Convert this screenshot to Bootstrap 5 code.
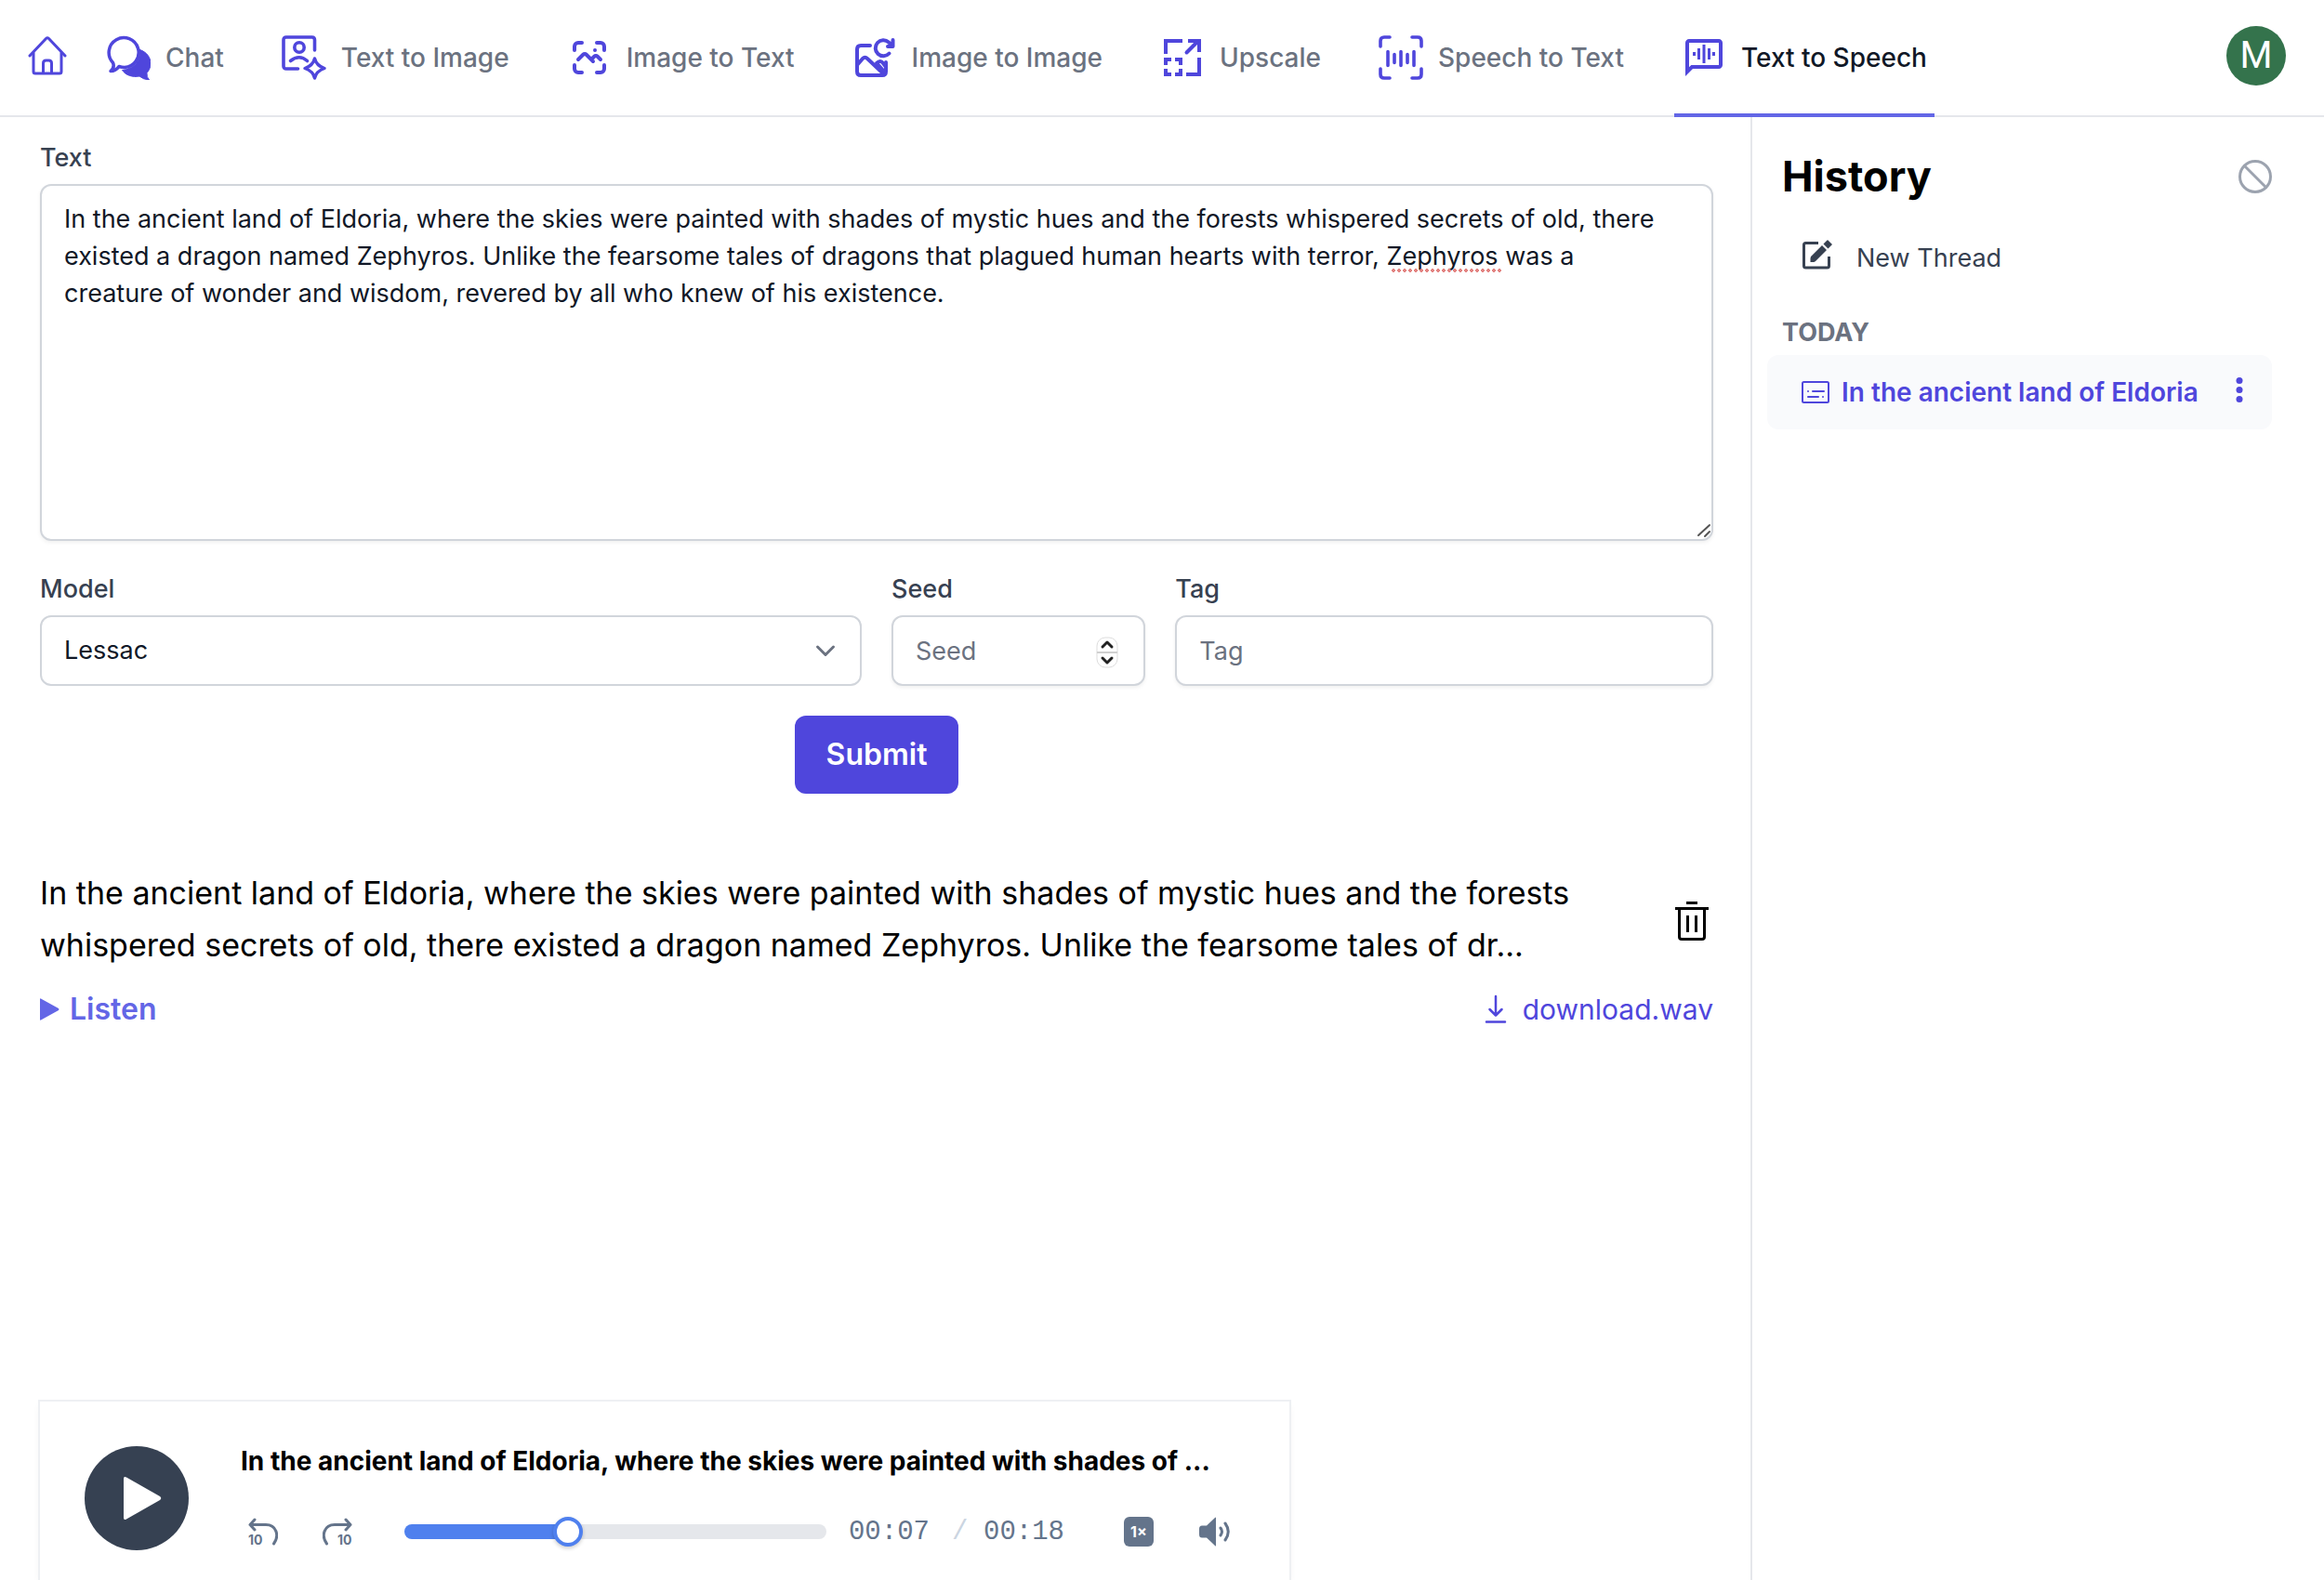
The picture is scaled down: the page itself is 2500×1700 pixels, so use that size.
<!DOCTYPE html>
<html lang="en">
<head>
<meta charset="utf-8">
<meta name="viewport" content="width=device-width, initial-scale=1">
<title>Text to Speech</title>
<link href="https://cdn.jsdelivr.net/npm/bootstrap@5.3.0/dist/css/bootstrap.min.css" rel="stylesheet">
<style>
  :root { --indigo: #4f46dc; --indigo-light: #6366e6; --line: #e5e7eb; --field: #d1d5db; --ink: #111827; --ink-soft: #374151; --muted: #6b7280; --slate: #64748b; }
  body { font-family: Inter, "Liberation Sans", sans-serif; font-size: 28px; line-height: 40px; color: #000; background: #fff; }
  svg { display: block; flex: none; }
  .ico { fill: none; stroke: currentColor; stroke-linecap: round; stroke-linejoin: round; }
  a { text-decoration: none; }

  .topbar { height: 126px; border-bottom: 2px solid var(--line); padding: 0 41px 0 28px; }
  .home-link { color: var(--indigo); margin-right: 32px; }
  .tabs { gap: 46px; }
  .tab-link { height: 126px; margin-bottom: -2px; padding: 2px 8px 0; gap: 16px; font-weight: 500; color: var(--muted); border-bottom: 4px solid transparent; white-space: nowrap; }
  .tab-link svg { color: var(--indigo); }
  .tab-link.active { color: var(--ink); border-bottom-color: var(--indigo-light); }
  .avatar { width: 64px; height: 64px; margin-bottom: 4px; border: 0; padding: 0; background: #34734c; color: #fff; font-family: Roboto, sans-serif; font-size: 40px; font-weight: 400; }

  .workspace { min-height: calc(100vh - 126px); }
  .main-pane { padding: 24px 40px 0 43px; }
  .history-pane { width: 617px; border-left: 2px solid var(--line); padding: 32px 56px 0 16px; }

  .form-label { font-size: 27px; font-weight: 500; color: var(--ink-soft); margin-bottom: 8px; display: block; }
  .field-row { --bs-gutter-x: 32px; margin-top: 32px; }
  .form-control, .form-select { font-size: 27px; line-height: 40px; color: var(--ink); border: 2px solid var(--field); border-radius: 12px; padding: 16px 24px; box-shadow: 0 2px 4px rgba(0,0,0,.06); }
  .form-control::placeholder { color: var(--muted); opacity: 1; }
  .form-select { box-shadow: none; background-size: 22px 14px; background-position: right 26px center;
    background-image: url("data:image/svg+xml,%3csvg xmlns='http://www.w3.org/2000/svg' viewBox='0 0 22 14'%3e%3cpath fill='none' stroke='%236b7280' stroke-width='3' stroke-linecap='round' stroke-linejoin='round' d='M2.500 3l8.500 8.500 8.500-8.500'/%3e%3c/svg%3e"); }
  input.form-control, .form-select { height: 76px; }
  textarea.form-control { height: 384px; resize: none; padding-right: 40px; }
  .grip { position: absolute; right: 2px; bottom: 3px; color: #555; }
  .misspelt { position: absolute; left: 1454px; top: 91px; width: 118px; height: 4px; background: radial-gradient(circle at 2px 2px, #e38482 2px, transparent 2px) 0 0 / 6px 4px repeat-x; }
  .stepper { position: absolute; right: 28px; top: 22px; }
  .btn-submit { margin-top: 32px; height: 84px; padding: 0 34px; border-radius: 12px; font-size: 32px; font-weight: 600; background: var(--indigo); color: #fff; border: 0; }

  .clip { margin-top: 79px; }
  .clip-text { font-size: 34px; line-height: 56px; max-width: 1680px; }
  .clip-links { font-size: 30px; margin-top: 21px; }
  .plain-btn { border: 0; background: none; padding: 0; color: inherit; }
  .listen { color: var(--indigo-light); font-size: 32px; font-weight: 600; gap: 11px; }
  .download { color: var(--indigo); gap: 16px; }

  .player { max-width: 1344px; width: 100%; box-shadow: 0 0 0 2px #eef0f3, 0 4px 8px rgba(15,23,42,.06); padding: 44px 62px 28px 48px; gap: 56px; }
  .play-btn { width: 112px; height: 112px; border: 0; background: #364152; color: #fff; padding: 0; }
  .player-title { font-weight: 700; margin-bottom: 32px; white-space: nowrap; }
  .controls { height: 48px; color: var(--slate); }
  .skips { gap: 48px; padding-left: 8px; width: 176px; }
  .seek { --played: 0%; appearance: none; height: 16px; border-radius: 8px; margin: 0; min-width: 0; background: linear-gradient(to right, #4f80ee var(--played), #e5e7eb var(--played)); }
  .seek::-webkit-slider-thumb { -webkit-appearance: none; width: 32px; height: 32px; border-radius: 50%; background: #fff; border: 4px solid #4f80ee; box-shadow: 0 2px 4px rgba(0,0,0,.2); }
  .seek::-moz-range-thumb { width: 24px; height: 24px; border-radius: 50%; background: #fff; border: 4px solid #4f80ee; }
  .times { font-family: "Liberation Mono", monospace; font-size: 29px; margin-left: 24px; gap: 24px; padding-top: 2px; white-space: nowrap; }
  .times .sep { color: #cbd5e1; width: 10px; }
  .speed { width: 32px; height: 32px; border: 0; border-radius: 6px; background: var(--slate); color: #fff; font-size: 16px; line-height: 32px; font-weight: 700; padding: 0; margin-left: 64px; }
  .volume { margin-left: 48px; }
  .svg-digits { font: 700 14px Inter, sans-serif; fill: currentColor; stroke: none; }

  .history-title { font-size: 45px; line-height: 64px; font-weight: 700; margin: 0; }
  .clear-btn { color: #9ca3af; }
  .history-head { padding-left: 16px; }
  .new-thread { color: var(--ink-soft); font-size: 27px; margin-top: 36px; padding-left: 38px; gap: 26px; }
  .day { font-size: 27px; line-height: 40px; font-weight: 700; color: var(--muted); margin: 40px 0 4px; padding-left: 16px; }
  .thread { height: 80px; border-radius: 12px; background: #f9fafc; color: var(--indigo); padding: 0 28px 0 36px; }
  .thread a { color: inherit; font-weight: 600; gap: 12px; white-space: nowrap; }
</style>
</head>
<body>
<header class="topbar d-flex align-items-center">
  <a class="home-link" href="#" aria-label="Home">
    <svg class="ico" width="46" height="48" viewBox="0 3 46 48" stroke-width="3"><path d="M4 25 21.500 6.500q1.500-1.500 3 0L42 25"/><path d="M8 22v20q0 2 2 2h26q2 0 2-2V22"/><path d="M18.500 43.500V33q0-3 3-3h3q3 0 3 3v10.500"/></svg>
  </a>
  <nav class="tabs d-flex" aria-label="Tools">
    <a class="tab-link d-flex align-items-center" href="#">
      <svg class="ico" width="48" height="48" viewBox="0 0 48 48"><path d="M5 38.500C8 36 9 33 7.500 29.500A16 16 0 1 1 20 34.500q-3 0-6-1-3.500 5-9 5Z" stroke-width="3.500"/><path d="M36.500 15.500C44 18 48 24 48 30c0 5-2 8-4 10.500q-.500 4.500 2.500 7.500-6.500-.500-10.500-4c-7 1.500-15-1-18.500-6.500C29 36 37.500 29 36.500 15.500Z" fill="currentColor"/></svg>
      <span>Chat</span></a>
    <a class="tab-link d-flex align-items-center" href="#">
      <svg class="ico" width="48" height="48" viewBox="0 0 48 48" stroke-width="3.600"><path d="M17.500 36H5q-3 0-3-3V5q0-3 3-3h27.500q3 0 3 3v11"/><circle cx="19" cy="13" r="5.200"/><path d="M9.500 27.500q9.500-7.500 18 0"/><path d="M35.500 25c1.500 6 4.500 8.500 10.500 10.500-6 2-9 4.500-10.500 10.500-1.500-6-4.500-8.500-10.500-10.500 6-2 9-4.500 10.500-10.500Z" stroke-width="3.400"/></svg>
      <span>Text to Image</span></a>
    <a class="tab-link d-flex align-items-center" href="#">
      <svg class="ico" width="48" height="48" viewBox="0 0 24 24" stroke-width="2"><path d="M15 8h.01M6 13l2.644-2.644a1.210 1.210 0 0 1 1.712 0L14 14M13 13l1.644-1.644a1.210 1.210 0 0 1 1.712 0L18 13M4 8V6a2 2 0 0 1 2-2h2M4 16v2a2 2 0 0 0 2 2h2M16 4h2a2 2 0 0 1 2 2v2M16 20h2a2 2 0 0 0 2-2v-2"/></svg>
      <span>Image to Text</span></a>
    <a class="tab-link d-flex align-items-center" href="#">
      <svg class="ico" width="48" height="48" viewBox="0 0 48 48" stroke-width="4"><path d="M19 11H9q-4 0-4 4v24q0 4 4 4h23q4 0 4-4V29"/><path d="M5 32l6-7q2.500-2.500 5 0l18 17"/><path d="M26 30q4-4 7 0l3 4M27 31l8 9"/><path d="M39.500 19.500A8.500 8.500 0 1 1 39 7.500l4 3.500M43.500 5v7H38"/></svg>
      <span>Image to Image</span></a>
    <a class="tab-link d-flex align-items-center" href="#">
      <svg width="48" height="48" viewBox="0 0 48 48" fill="none" stroke="currentColor" stroke-width="4"><path d="M6 20V6h18M30 6h12v12M42 24v18H28M6 32v-6h6M16 26h6v6M6 36v6h6M16 42h6v-6"/><path d="M28.500 18.500 40 7" stroke-linecap="round"/></svg>
      <span>Upscale</span></a>
    <a class="tab-link d-flex align-items-center" href="#">
      <svg class="ico" width="48" height="48" viewBox="0 0 48 48" stroke-width="3.600"><path d="M12 2H6Q2 2 2 6v6M36 2h6q4 0 4 4v6M2 36v6q0 4 4 4h6M46 36v6q0 4-4 4h-6M10 17.500v15M17 20.500v9M24 17.500v15M31 20.500v9M38 17.500v15"/></svg>
      <span>Speech to Text</span></a>
    <a class="tab-link active d-flex align-items-center" href="#" aria-current="page">
      <svg width="48" height="48" viewBox="0 0 48 48"><path fill="currentColor" d="M40 4H8C5.800 4 4 5.800 4 8v36l8-8h28c2.200 0 4-1.800 4-4V8c0-2.200-1.800-4-4-4Zm0 28H10.300L8 34.300V8h32Z"/><path stroke="currentColor" stroke-width="3" d="M13.500 18v4M18.500 14v12M24 10v20M29.500 14v12M34.500 18v4"/></svg>
      <span>Text to Speech</span></a>
  </nav>
  <button class="avatar rounded-circle ms-auto" type="button">M</button>
</header>

<div class="workspace d-flex">
  <main class="main-pane flex-grow-1 d-flex flex-column">
    <form>
      <label class="form-label" for="speech-text">Text</label>
      <div class="position-relative">
        <textarea class="form-control" id="speech-text" spellcheck="false">In the ancient land of Eldoria, where the skies were painted with shades of mystic hues and the forests whispered secrets of old, there existed a dragon named Zephyros. Unlike the fearsome tales of dragons that plagued human hearts with terror, Zephyros was a creature of wonder and wisdom, revered by all who knew of his existence.</textarea>
        <i class="misspelt"></i>
        <svg class="grip ico" width="16" height="16" viewBox="0 0 16 16" stroke-width="2"><path d="M2 13 14 2M9 14l5-5"/></svg>
      </div>
      <div class="row field-row">
        <div class="col-6">
          <label class="form-label" for="model">Model</label>
          <select class="form-select" id="model"><option>Lessac</option></select>
        </div>
        <div class="col-2">
          <label class="form-label" for="seed">Seed</label>
          <div class="position-relative">
            <input class="form-control" id="seed" type="text" inputmode="numeric" placeholder="Seed">
            <svg class="stepper" width="26" height="36" viewBox="0 0 26 36"><rect x="2" y="2" width="22" height="32" rx="9" fill="#fff" stroke="#ddd"/><path d="M2 18h22" stroke="#d0d0d0" stroke-width="2"/><path fill="none" stroke="#222" stroke-width="3" stroke-linecap="round" stroke-linejoin="round" d="m8 12 5-5 5 5M8 24l5 5 5-5"/></svg>
          </div>
        </div>
        <div class="col-4">
          <label class="form-label" for="tag">Tag</label>
          <input class="form-control" id="tag" type="text" placeholder="Tag">
        </div>
      </div>
      <div class="text-center"><button class="btn btn-submit" type="submit">Submit</button></div>
    </form>

    <section class="clip">
      <div class="d-flex align-items-center justify-content-between">
        <div class="clip-text">In the ancient land of Eldoria, where the skies were painted with shades of mystic hues and the forests whispered secrets of old, there existed a dragon named Zephyros. Unlike the fearsome tales of dr...</div>
        <button class="plain-btn" type="button" aria-label="Delete">
          <svg width="46" height="48" viewBox="0 0 46 48" fill="none" stroke="currentColor" stroke-width="3"><path d="M17 6.500h12M5 12.500h36M9.500 12.500V43q0 2.500 2.500 2.500h22q2.500 0 2.500-2.500V12.500M18.500 20v18M27.500 20v18"/></svg>
        </button>
      </div>
      <div class="clip-links d-flex justify-content-between">
        <button class="plain-btn listen d-flex align-items-center" type="button"><svg width="21" height="24" viewBox="0 0 21 24" fill="currentColor"><path d="M0 1q0-1 1-.5L20 11q1 1 0 2L1 23.500q-1 .500-1-.5Z"/></svg>Listen</button>
        <a class="download d-flex align-items-center" href="#"><svg class="ico" width="26" height="32" viewBox="0 0 26 32" stroke-width="2.500"><path d="M13 2v20M6.500 16l6.500 6.500 6.500-6.500M3 29.500h20"/></svg>download.wav</a>
      </div>
    </section>

    <section class="player d-flex align-items-center mt-auto" aria-label="Player">
      <button class="play-btn rounded-circle d-flex align-items-center justify-content-center flex-shrink-0" type="button" aria-label="Play">
        <svg width="112" height="112" viewBox="0 0 112 112" fill="currentColor"><path d="M42 35q0-3 3-1.500L81 54q2.500 2 0 4L45 78.500Q42 80 42 77Z"/></svg>
      </button>
      <div class="flex-grow-1">
        <div class="player-title">In the ancient land of Eldoria, where the skies were painted with shades of ...</div>
        <div class="controls d-flex align-items-center">
          <div class="skips d-flex flex-shrink-0">
            <button class="plain-btn" type="button" aria-label="Back ten seconds"><svg class="ico" width="32" height="32" viewBox="0 0 32 32" stroke-width="3"><path d="M7 3 2 8.500 7 14M2 8.500h17C30 8.500 34 20 27.500 29"/><text class="svg-digits" x="0" y="30">10</text></svg></button>
            <button class="plain-btn" type="button" aria-label="Forward ten seconds"><svg class="ico" width="32" height="32" viewBox="0 0 32 32" stroke-width="3"><path d="M25 3l5 5.500L25 14M30 8.500H13C2 8.500-2 20 4.500 29"/><text class="svg-digits" x="16" y="30">10</text></svg></button>
          </div>
          <input class="seek flex-grow-1" type="range" min="0" max="100" value="38" aria-label="Seek" style="--played:38%">
          <div class="times d-flex"><span>00:07</span><span class="sep">/</span><span>00:18</span></div>
          <button class="speed flex-shrink-0" type="button">1×</button>
          <button class="plain-btn volume" type="button" aria-label="Volume"><svg width="36" height="32" viewBox="0 0 36 32"><path fill="currentColor" d="M19 1v30q0 1-1 0L9 22.500H4Q1 22.500 1 19v-6q0-3.500 3-3.500h5L18 1q1-1 1 0Z"/><path class="ico" stroke-width="3" d="M24 12q3 4 0 8M29 7q6.500 9 0 18"/></svg></button>
        </div>
      </div>
    </section>
  </main>

  <aside class="history-pane flex-shrink-0">
    <div class="history-head d-flex align-items-center justify-content-between">
      <h2 class="history-title">History</h2>
      <button class="plain-btn clear-btn" type="button" aria-label="Clear"><svg class="ico" width="36" height="36" viewBox="0 0 36 36" stroke-width="3"><circle cx="18" cy="18" r="16.500"/><path d="m6.500 6.500 23 23"/></svg></button>
    </div>
    <a class="new-thread d-flex" href="#"><svg width="32" height="32" viewBox="0 0 32 32"><path fill="none" stroke="currentColor" stroke-width="3" stroke-linejoin="round" d="M17 3.500H3.500q-2 0-2 2V28q0 2 2 2h23q2 0 2-2V18"/><path fill="currentColor" d="M9 18 21 6l5 5-12 12q-1 1-2 1H8.500v-4ZM22.500 4.500 26.500.5q.500-.5 1 0L32 5l-4.500 4.500Z"/></svg>New Thread</a>
    <h3 class="day">TODAY</h3>
    <div class="thread d-flex align-items-center justify-content-between">
      <a class="d-flex align-items-center" href="#"><svg class="ico" width="32" height="26" viewBox="0 0 32 26" stroke-width="2"><rect x="2" y="2" width="28" height="22" rx="1.500"/><path d="M8 12h.01M13 12h12M8 18h11M24 18h.01"/></svg>In the ancient land of Eldoria</a>
      <button class="plain-btn" type="button" aria-label="More"><svg width="14" height="32" viewBox="0 0 14 32" fill="currentColor"><circle cx="7" cy="3.500" r="3.500"/><circle cx="7" cy="13.500" r="3.500"/><circle cx="7" cy="23.500" r="3.500"/></svg></button>
    </div>
  </aside>
</div>
<script src="https://cdn.jsdelivr.net/npm/bootstrap@5.3.0/dist/js/bootstrap.bundle.min.js"></script>
</body>
</html>
